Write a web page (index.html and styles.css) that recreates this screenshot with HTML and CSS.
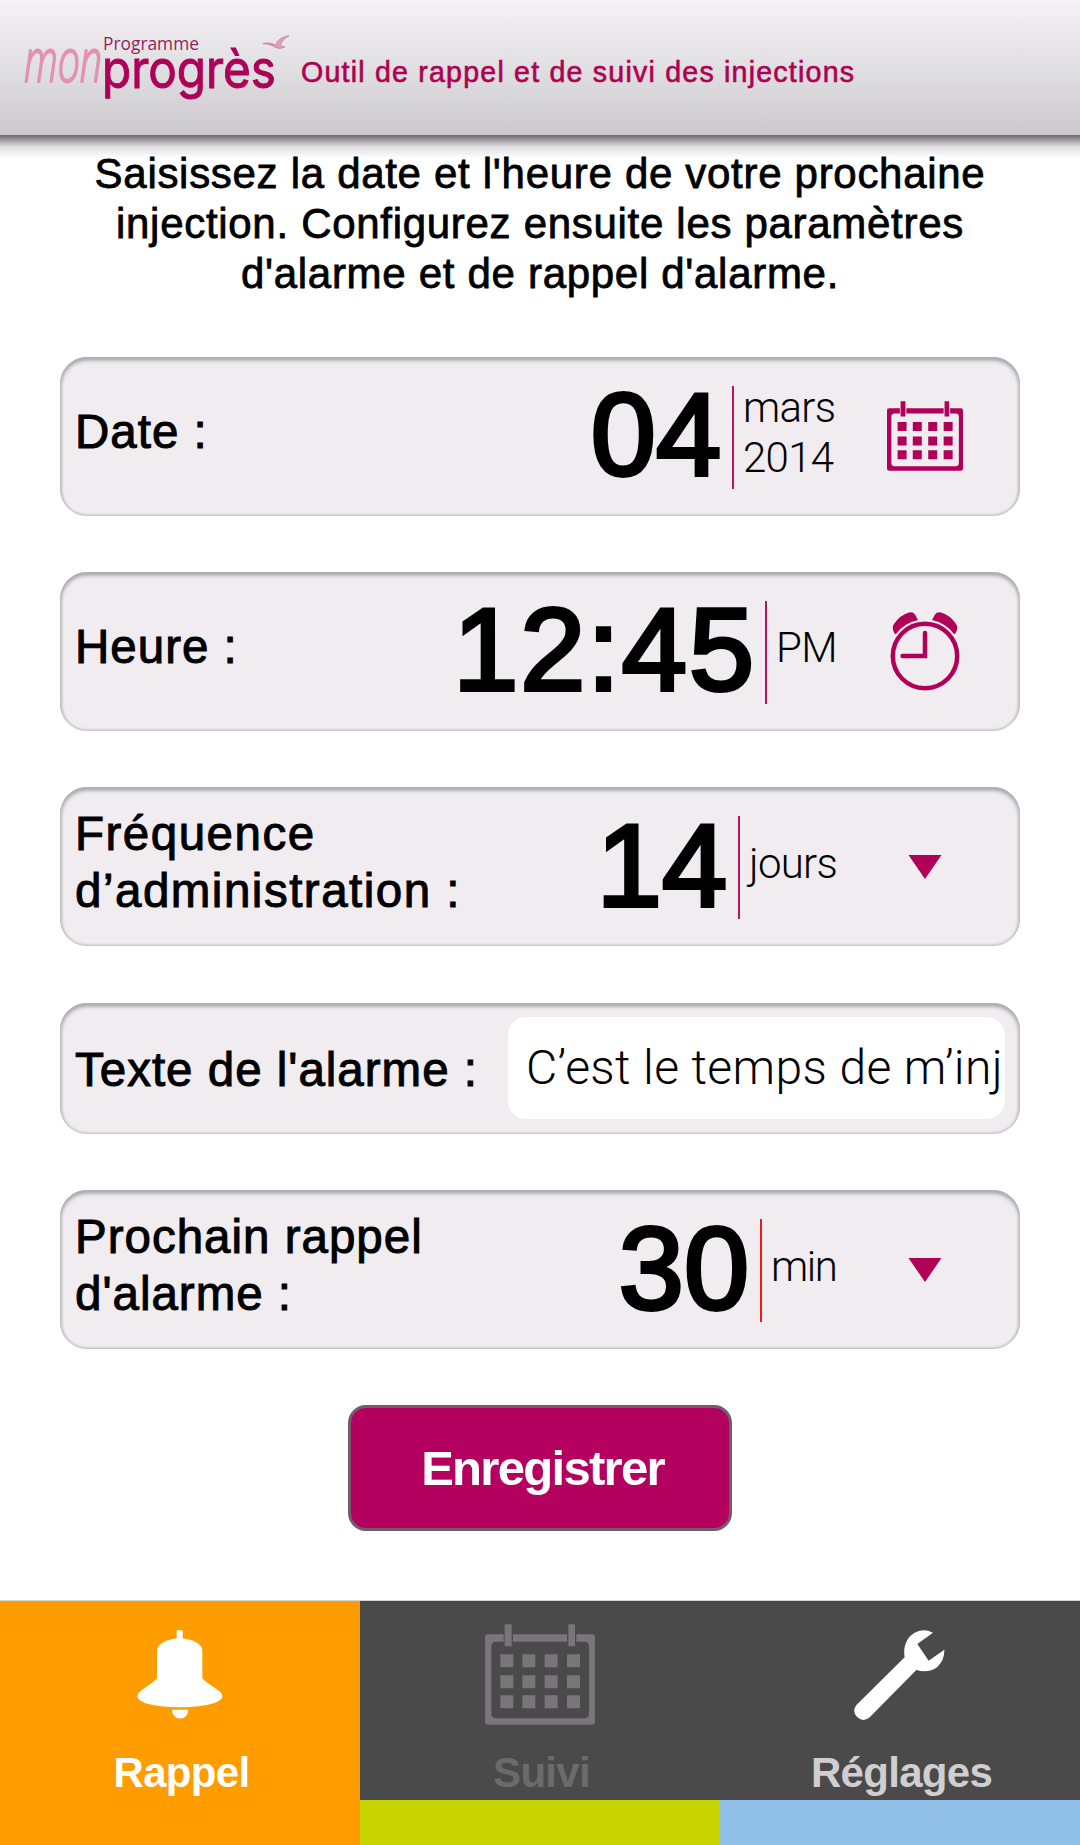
FILE: index.html
```html
<!DOCTYPE html>
<html lang="fr">
<head>
  <meta charset="UTF-8" />
  <meta name="viewport" content="width=device-width, initial-scale=1.0" />
  <title>Mon Progrès - Rappel</title>
  <link rel="stylesheet" href="styles.css">
</head>
<body>
  <!-- Shared calendar shape -->
  <svg class="defs" width="0" height="0">
    <symbol id="calendar" viewBox="0 0 330 302">
      <path fill="currentColor" fill-rule="evenodd" d="M10 30H56V53H33Q19 53 19 67V268Q19 282 33 282H298Q312 282 312 268V67Q312 53 298 53H274V30H320Q330 30 330 40V292Q330 302 320 302H10Q0 302 0 292V40Q0 30 10 30ZM84 30H246V53H84Z" />
      <path fill="currentColor" d="M59 0h21v66h-21zM250 0h20v66h-20z" />
      <path fill="currentColor" d="M46 90h39v39h-39zM112 90h39v39h-39zM179 90h39v39h-39zM246 90h39v39h-39zM46 153h39v39h-39zM112 153h39v39h-39zM179 153h39v39h-39zM246 153h39v39h-39zM46 213h39v39h-39zM112 213h39v39h-39zM179 213h39v39h-39zM246 213h39v39h-39z" />
    </symbol>
  </svg>

  <header class="header">
    <svg class="logo" width="302" height="135" viewBox="0 0 302 135">
      <text class="logo-mon" x="24" y="82" textLength="78" lengthAdjust="spacingAndGlyphs">mon</text>
      <text class="logo-programme" x="103" y="50" textLength="96" lengthAdjust="spacingAndGlyphs">Programme</text>
      <text class="logo-progres" x="102" y="87.500" textLength="174" lengthAdjust="spacingAndGlyphs">progrès</text>
      <path class="logo-bird" d="M263 43.500Q269 41.500 276 45Q277 38 289 35.500Q282 40 280.500 44.500Q282 47 285 47Q279 50 275 47Q269 43.500 263 43.500Z" />
    </svg>
    <h1 class="title">Outil de rappel et de suivi des injections</h1>
  </header>

  <main class="content">
    <p class="intro">Saisissez la date et l'heure de votre prochaine<br>injection. Configurez ensuite les paramètres<br>d'alarme et de rappel d'alarme.</p>

    <div class="card">
      <div class="label">Date :</div>
      <div class="number">04</div>
      <div class="unit unit-date">mars<br>2014</div>
      <div class="icon"><svg width="76" height="70"><use href="#calendar" /></svg></div>
    </div>

    <div class="card">
      <div class="label">Heure :</div>
      <div class="number number-time">12:45</div>
      <div class="unit unit-time">PM</div>
      <div class="icon">
        <svg width="70" height="79" viewBox="0 0 70 79" fill="none" stroke="currentColor" stroke-width="4.500">
          <circle cx="35" cy="44" r="32.200" />
          <path d="M12.500 44H35V21" stroke-linecap="round" />
          <path stroke="none" fill="currentColor" d="M5 22Q1 16 4 12Q10 3 19 .5Q23 -.5 25 2.500L28 8Q14 11 6 22ZM65 22Q69 16 66 12Q60 3 51 .5Q47 -.5 45 2.500L42 8Q56 11 64 22Z" />
        </svg>
      </div>
    </div>

    <div class="card">
      <div class="label label-wide">Fréquence<br>d’administration :</div>
      <div class="number">14</div>
      <div class="unit unit-days">jours</div>
      <div class="icon"><svg width="34" height="24"><path fill="currentColor" d="M.5 0H33.500L17 24Z" /></svg></div>
    </div>

    <div class="card card-text">
      <div class="label">Texte de l'alarme :</div>
      <input class="field" type="text" value="C’est le temps de m’inj">
    </div>

    <div class="card">
      <div class="label">Prochain rappel<br>d'alarme :</div>
      <div class="number">30</div>
      <div class="unit unit-min">min</div>
      <div class="icon"><svg width="34" height="24"><path fill="currentColor" d="M.5 0H33.500L17 24Z" /></svg></div>
    </div>

    <button class="save">Enregistrer</button>
  </main>

  <nav class="tabs">
    <a class="tab tab-rappel">
      <span class="tab-icon">
        <svg width="86" height="89" viewBox="410 152 258 266">
          <path fill="#fff" d="M529 152H547V176Q583 180 600 198Q606 205 606 214V296Q614 306 652 331Q666 341 666 351Q666 362 641 371Q600 383 538 383Q476 383 436 371Q411 362 411 351Q411 341 425 331Q462 306 470 296V214Q470 205 476 198Q494 180 529 176ZM515 391H564Q562 417 539.500 417Q517 417 515 391Z" />
        </svg>
      </span>
      <span class="tab-label">Rappel</span>
    </a>
    <a class="tab tab-suivi">
      <span class="tab-icon"><svg width="110" height="101"><use href="#calendar" /></svg></span>
      <span class="tab-label">Suivi</span>
    </a>
    <a class="tab tab-reglages">
      <span class="tab-icon">
        <svg width="95" height="95" viewBox="398 140 285 285">
          <path fill="#fff" d="M638 157L591 191L625 241L672 208Q673 240 651 260Q624 280 588 269L449 410Q430 427 411 411Q393 393 409 373L553 231Q547 195 567 170Q598 138 638 157Z" />
        </svg>
      </span>
      <span class="tab-label">Réglages</span>
    </a>
  </nav>
</body>
</html>
```
FILE: styles.css
```css
* {
  box-sizing: border-box;
}

body {
  display: flex;
  flex-direction: column;
  height: 1845px;
  margin: 0;
  overflow: hidden;
  background: #fff;
  color: #000;
  font-family: "Liberation Sans", Arial, sans-serif;
}

.defs {
  position: absolute;
}

/* Header */
.header {
  display: flex;
  flex: none;
  height: 135px;
  background: linear-gradient(#f6f2f6, #e0dfe2 50%, #ccc9cd);
}

.header::after {
  content: "";
  position: absolute;
  top: 135px;
  left: 0;
  width: 100%;
  height: 23px;
  background: linear-gradient(rgba(70, 66, 70, 0.8), rgba(150, 140, 150, 0.3) 50%, rgba(255, 255, 255, 0));
}

.logo {
  flex: none;
}

.logo-mon {
  font: italic 300 61px "Open Sans", sans-serif;
  fill: #e391b0;
  stroke: #e391b0;
  stroke-width: 2px;
  stroke-linejoin: round;
}

.logo-programme {
  font: 19px "Open Sans", sans-serif;
  fill: #981c5b;
}

.logo-progres {
  font: 53px Inter, sans-serif;
  fill: #ad0058;
  stroke: #ad0058;
  stroke-width: 1px;
}

.logo-bird {
  fill: #dda0b5;
  stroke: #b9718c;
  stroke-width: 0.6px;
}

.title {
  margin: 56px 0 0 -1px;
  color: #b00050;
  font-size: 28.6px;
  font-weight: normal;
  line-height: 33px;
  letter-spacing: 1.2px;
  white-space: nowrap;
  -webkit-text-stroke: 0.6px #b00050;
}

/* Form */
.content {
  display: flex;
  flex: 1;
  flex-direction: column;
  align-items: center;
  padding-top: 14px;
}

.intro {
  margin: 0 0 58px;
  font-size: 42px;
  line-height: 50px;
  letter-spacing: 0.7px;
  text-align: center;
  white-space: nowrap;
  -webkit-text-stroke: 0.8px #000;
}

.card {
  display: flex;
  flex: none;
  align-items: center;
  width: 960px;
  height: 158.5px;
  margin-bottom: 56.7px;
  padding: 0 5px 0 15px;
  border-radius: 27px;
  background: #f0ecf0;
  box-shadow: inset 0 0 3px 1px #b9b9c0, inset 0 3px 4px #94949b;
}

.card-text {
  height: 131px;
  padding-right: 15px;
}

.label {
  flex: 1;
  padding-bottom: 10px;
  font-size: 47.5px;
  line-height: 57px;
  letter-spacing: 1px;
  white-space: nowrap;
  -webkit-text-stroke: 1px #000;
}

.label-wide {
  letter-spacing: 1.5px;
}

.card-text .label {
  padding: 2px 0 0;
}

.number {
  padding: 0 11px 3px 0;
  font-size: 117px;
  line-height: 117px;
  -webkit-text-stroke: 4px #000;
}

.number-time {
  padding-right: 9px;
  letter-spacing: 2px;
}

.unit {
  display: flex;
  align-items: center;
  height: 103px;
  margin-top: 2px;
  padding: 0 0 8px 9px;
  border-left: 2px solid #b5145f;
  font-family: Roboto, sans-serif;
  font-size: 42px;
  font-weight: 300;
  line-height: 50px;
  letter-spacing: -0.7px;
  white-space: nowrap;
}

.unit-date {
  width: 103px;
}

.unit-time {
  width: 70px;
}

.unit-days {
  width: 97px;
}

.unit-min {
  width: 75px;
  border-color: #f01818;
  letter-spacing: -1.5px;
}

.icon {
  display: flex;
  align-items: center;
  justify-content: center;
  width: 180px;
  color: #b00058;
}

.field {
  width: 497px;
  height: 102px;
  padding: 0 0 1px 18px;
  border: 0;
  border-radius: 18px;
  background: #fff;
  color: #000;
  font-family: Roboto, sans-serif;
  font-size: 48px;
  font-weight: 300;
  letter-spacing: 0.4px;
}

.save {
  width: 384px;
  height: 126px;
  padding: 0 0 0 5px;
  border: 3px solid #755c6d;
  border-radius: 18px;
  background: #b4005f;
  color: #fff;
  font: bold 49px "Liberation Sans", Arial, sans-serif;
  letter-spacing: -1.7px;
}

/* Bottom tabs */
.tabs {
  display: flex;
  flex: none;
  height: 245px;
  border-top: 1px solid #d5d5d5;
}

.tab {
  display: flex;
  flex: 1;
  flex-direction: column;
  align-items: center;
  background: #4a4a4a;
  border-bottom: 45px solid;
}

.tab-rappel {
  background: #ff9c00;
  border-color: #ff9c00;
  color: #fff;
}

.tab-suivi {
  border-color: #c8d400;
  color: #787678;
}

.tab-reglages {
  border-color: #90c0e7;
  color: #d0ced1;
}

.tab-icon {
  display: flex;
  align-items: center;
  height: 147px;
}

.tab-label {
  padding-left: 3px;
  font-size: 42px;
  font-weight: bold;
  line-height: 50px;
  letter-spacing: -0.7px;
}

.tab-suivi .tab-label {
  color: #6c6b6c;
}
```
